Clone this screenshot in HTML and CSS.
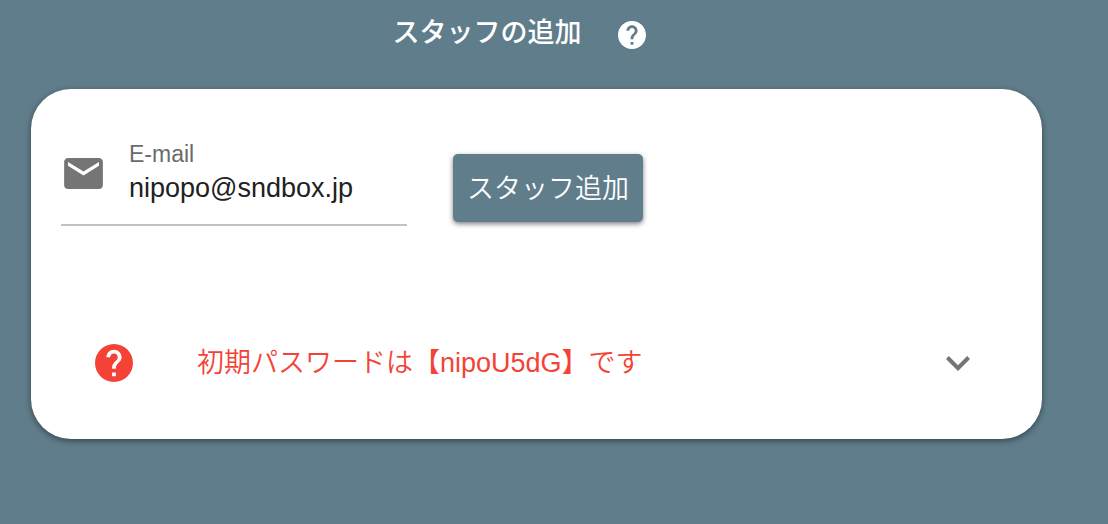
FILE: index.html
```html
<!DOCTYPE html>
<html lang="ja">
<head>
<meta charset="utf-8">
<meta name="viewport" content="width=device-width, initial-scale=1">
<title>スタッフの追加</title>
<link rel="stylesheet" href="styles.css">
</head>
<body>
<header class="header">
  <h1 class="title">スタッフの追加</h1>
  <button class="icon-button" type="button" aria-label="ヘルプ">
    <svg class="help-icon" viewBox="2 2 20 20" aria-hidden="true"><path fill="currentColor" d="M12 2C6.480 2 2 6.480 2 12s4.480 10 10 10 10-4.480 10-10S17.520 2 12 2zm1 17h-2v-2h2v2zm2.070-7.750l-.9.920C13.450 12.900 13 13.500 13 15h-2v-.5c0-1.100.450-2.100 1.170-2.830l1.240-1.260c.370-.360.590-.860.590-1.410 0-1.100-.9-2-2-2s-2 .9-2 2H8c0-2.210 1.790-4 4-4s4 1.790 4 4c0 .880-.360 1.680-.930 2.250z"/></svg>
  </button>
</header>
<main class="card">
  <form class="form">
    <div class="field">
      <svg class="mail-icon" viewBox="2 4 20 16" aria-hidden="true"><path fill="currentColor" d="M20 4H4c-1.100 0-1.990.9-1.990 2L2 18c0 1.100.9 2 2 2h16c1.100 0 2-.9 2-2V6c0-1.100-.9-2-2-2zm0 4l-8 5-8-5V6l8 5 8-5v2z"/></svg>
      <div class="field-text">
        <label class="label" for="email">E-mail</label>
        <input class="input" id="email" type="email" value="nipopo@sndbox.jp">
      </div>
    </div>
    <button class="add-button" type="button">スタッフ追加</button>
  </form>
  <button class="notice" type="button" aria-expanded="false">
    <svg class="notice-icon" viewBox="2 2 20 20" aria-hidden="true"><path fill="currentColor" d="M12 2C6.480 2 2 6.480 2 12s4.480 10 10 10 10-4.480 10-10S17.520 2 12 2zm1 17h-2v-2h2v2zm2.070-7.750l-.9.920C13.450 12.900 13 13.500 13 15h-2v-.5c0-1.100.450-2.100 1.170-2.830l1.240-1.260c.370-.360.590-.860.590-1.410 0-1.100-.9-2-2-2s-2 .9-2 2H8c0-2.210 1.790-4 4-4s4 1.790 4 4c0 .880-.360 1.680-.930 2.250z"/></svg>
    <span class="notice-text">初期パスワードは【nipoU5dG】です</span>
    <svg class="chevron" viewBox="6 8.590 12 7.410" aria-hidden="true"><path fill="currentColor" d="M16.590 8.590L12 13.170 7.410 8.590 6 10l6 6 6-6z"/></svg>
  </button>
</main>
</body>
</html>
```
FILE: styles.css
```css
* {
  box-sizing: border-box;
}

body {
  min-height: 100vh;
  margin: 0;
  background: #607d8b;
  color: #212121;
  font-family: "Liberation Sans", "Noto Sans CJK JP", sans-serif;
  font-size: 27px;
}

button {
  font: inherit;
  border: 0;
  cursor: pointer;
}

.header {
  display: flex;
  justify-content: center;
  align-items: center;
  gap: 36px;
  height: 69px;
  padding-right: 70px;
  color: #fff;
}

.title {
  margin: 0;
  padding-bottom: 8px;
  font-family: "Noto Sans CJK JP", sans-serif;
  font-size: 27px;
  line-height: 40px;
  font-weight: 500;
}

.icon-button {
  padding: 0;
  background: none;
  color: inherit;
}

.help-icon {
  display: block;
  width: 28px;
  height: 28px;
}

.card {
  margin: 20px 66px 0 31px;
  padding: 49px 30px 36px;
  border-radius: 40px;
  background: #fff;
  box-shadow: 0 2px 6px rgba(0, 0, 0, 0.45);
}

.form {
  display: flex;
  align-items: flex-end;
  gap: 46px;
}

.field {
  display: flex;
  flex: 0 1 346px;
  gap: 26px;
  height: 88px;
  padding-left: 3px;
  border-bottom: 2px solid #c2c2c2;
}

.mail-icon {
  flex: none;
  width: 39px;
  height: 31px;
  margin-top: 20px;
  color: #757575;
}

.field-text {
  flex: 1;
  min-width: 0;
}

.label {
  display: block;
  color: #6b6b6b;
  font-size: 23px;
  line-height: 32px;
}

.input {
  display: block;
  width: 100%;
  padding: 0;
  border: 0;
  outline: 0;
  background: none;
  color: #212121;
  font: inherit;
  line-height: 36px;
}

.add-button {
  height: 68px;
  margin-bottom: 4px;
  padding: 0 14px 4px;
  border-radius: 5px;
  background: #607d8b;
  color: #fff;
  font-family: "Noto Sans CJK JP", sans-serif;
  font-weight: 350;
  box-shadow: 0 2px 5px rgba(0, 0, 0, 0.5);
}

.notice {
  display: flex;
  align-items: center;
  width: 100%;
  height: 80px;
  margin-top: 97px;
  padding: 0 42px 0 34px;
  background: none;
  color: #f44336;
  font-weight: 350;
  text-align: left;
}

.notice-icon {
  flex: none;
  width: 38px;
  height: 38px;
}

.notice-text {
  flex: 1;
  margin-left: 64px;
  padding-bottom: 6px;
}

.chevron {
  flex: none;
  width: 24px;
  height: 15px;
  color: #757575;
}
```
